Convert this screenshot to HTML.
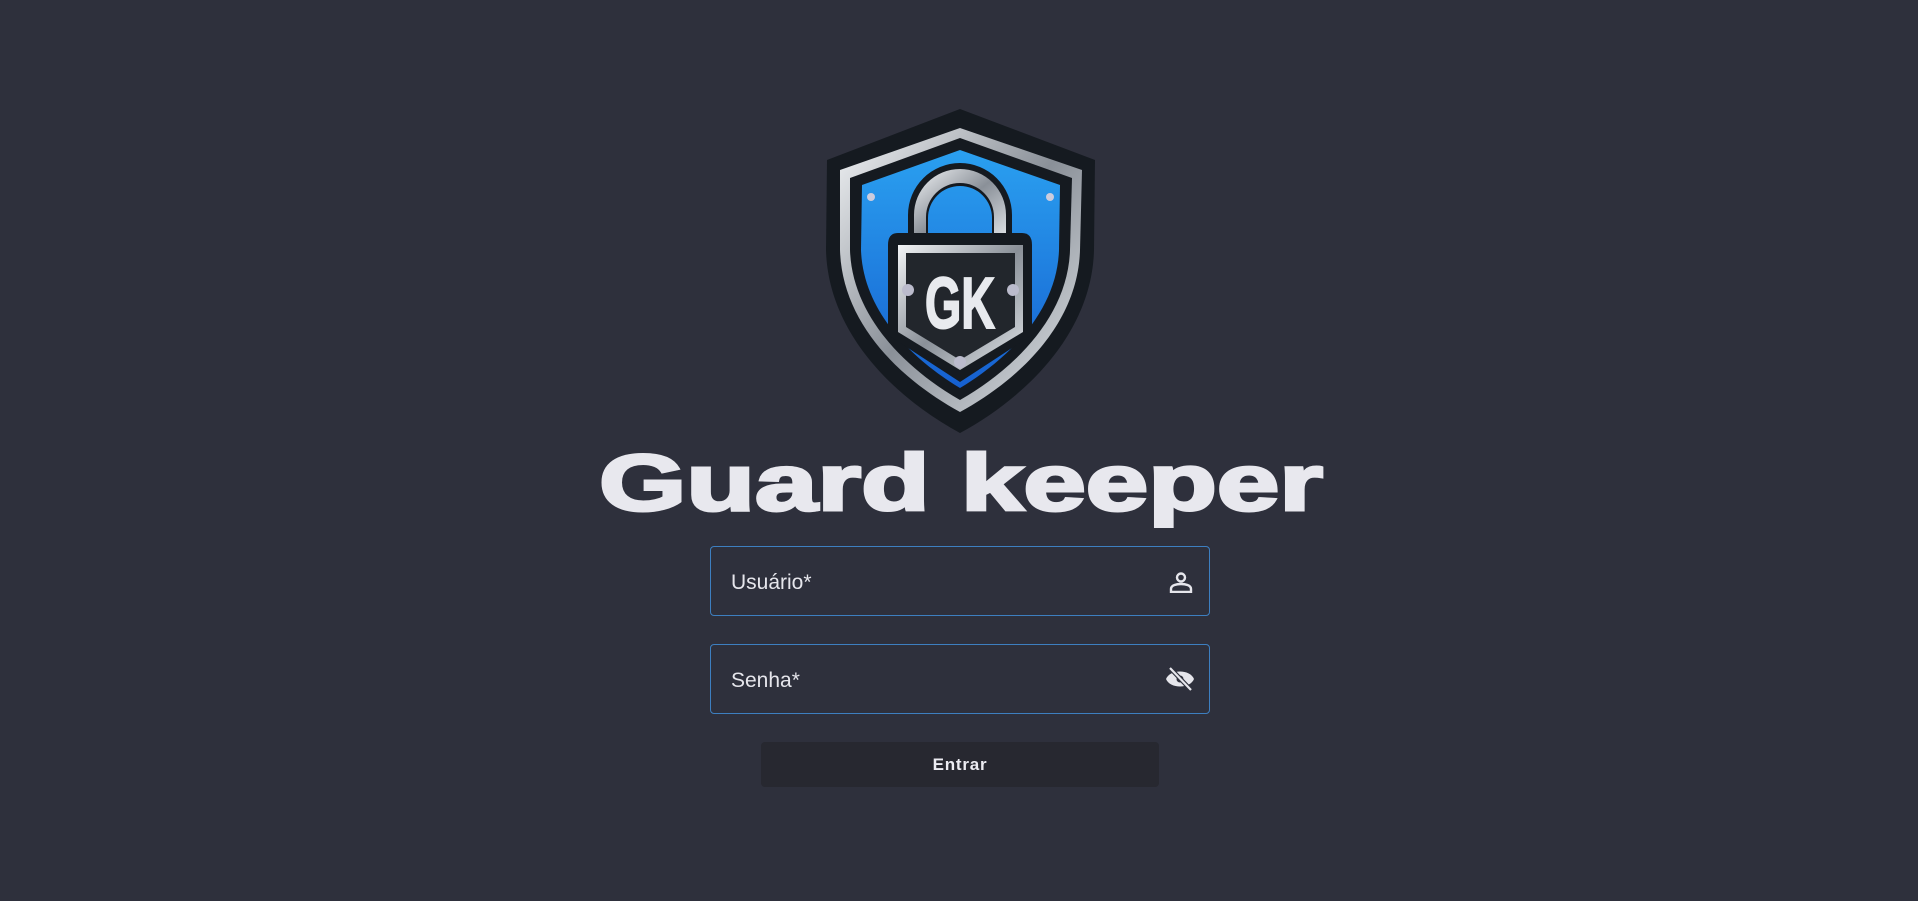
<!DOCTYPE html>
<html><head><meta charset="utf-8"><style>
html,body{margin:0;padding:0;width:1918px;height:901px;background:#2e303c;overflow:hidden;font-family:"Liberation Sans",sans-serif}
.f{position:absolute;left:710px;width:498px;height:68px;border:1px solid #3d7fc0;border-radius:4px;box-sizing:content-box}
.f span{position:absolute;left:20px;top:2px;line-height:68px;font-size:21px;color:#e6e6ec}
.btn{position:absolute;left:761px;top:742px;width:398px;height:45px;background:#272830;border-radius:4px;color:#ececf2;font-size:17px;font-weight:bold;letter-spacing:0.8px;text-align:center;line-height:45px}
</style></head><body>
<svg style="position:absolute;left:810px;top:100px" width="300" height="340" viewBox="0 0 300 340">
<defs>
<linearGradient id="sv" x1="0" y1="0" x2="1" y2="1"><stop offset="0" stop-color="#f2f4f6"/><stop offset=".5" stop-color="#8a9098"/><stop offset="1" stop-color="#e0e4e8"/></linearGradient>
<linearGradient id="bl" x1="0" y1="0" x2="0" y2="1"><stop offset="0" stop-color="#2aa0f0"/><stop offset="1" stop-color="#1660d0"/></linearGradient>
</defs>
<path d="M150 9 L285 60 L284 150 C282 230 220 295 150 333 C80 295 18 230 16 150 L17 60 Z" fill="#151a20"/>
<path d="M150 28 L272 70 L270 150 C268 222 212 278 150 312 C88 278 32 222 30 150 L30 70 Z" fill="url(#sv)"/>
<path d="M150 38 L262 78 L260 150 C258 215 206 268 150 300 C94 268 42 215 40 150 L40 78 Z" fill="#151a20"/>
<path d="M150 50 L250 85 L249 150 C247 210 200 258 150 288 C100 258 53 210 51 150 L52 85 Z" fill="url(#bl)"/>
<circle cx="61" cy="97" r="4" fill="#ccd"/><circle cx="240" cy="97" r="4" fill="#ccd"/>
<path d="M98 145 L98 115 A52 52 0 0 1 202 115 L202 145 L182 145 L182 118 A32 32 0 0 0 118 118 L118 145 Z" fill="#151a20"/>
<path d="M104 140 L104 115 A46 46 0 0 1 196 115 L196 140 L184 140 L184 117 A34 34 0 0 0 116 117 L116 140 Z" fill="url(#sv)"/>
<path d="M88 133 Q78 133 78 145 L78 235 L150 282 L222 235 L222 145 Q222 133 212 133 Z" fill="#151a20"/>
<path d="M88 145 L213 145 L213 232 L150 270 L88 232 Z" fill="url(#sv)"/>
<path d="M96 153 L205 153 L205 227 L150 260 L96 227 Z" fill="#22262c"/>
<circle cx="98" cy="190" r="6" fill="#bbc"/><circle cx="203" cy="190" r="6" fill="#bbc"/><circle cx="150" cy="262" r="6" fill="#bbc"/>
<text x="150" y="228" text-anchor="middle" font-family="Liberation Sans Narrow, Liberation Sans, sans-serif" font-weight="bold" font-size="72" fill="#e8eaee" stroke="#e8eaee" stroke-width="2" textLength="70" lengthAdjust="spacingAndGlyphs">GK</text>
</svg>
<svg style="position:absolute;left:590px;top:440px" width="740" height="100">
<text x="9" y="70" font-family="Liberation Sans, sans-serif" font-weight="bold" font-size="80" fill="#e8e8ee" stroke="#e8e8ee" stroke-width="3" stroke-linejoin="miter" textLength="724" lengthAdjust="spacingAndGlyphs">Guard keeper</text>
</svg>
<div class="f" style="top:546px"><span>Usuário*</span>
<svg style="position:absolute;left:458px;top:25px" width="24" height="21" viewBox="0 0 24 21"><circle cx="12" cy="5.5" r="4" fill="none" stroke="#e6e6ec" stroke-width="2.4"/><path d="M2 20 L2 17 C2 13 8 12 12 12 C16 12 22 13 22 17 L22 20 Z" fill="none" stroke="#e6e6ec" stroke-width="2.4"/></svg>
</div>
<div class="f" style="top:644px"><span>Senha*</span>
<svg style="position:absolute;left:455px;top:22px" width="28" height="24" viewBox="0 0 28 24"><path d="M0 12 C4 2 24 2 28 12 C24 22 4 22 0 12 Z" fill="#e6e6ec"/><circle cx="14" cy="12" r="3.5" fill="#2e303c"/><line x1="4" y1="1" x2="25" y2="23" stroke="#2e303c" stroke-width="4.5"/><line x1="4" y1="1" x2="25" y2="23" stroke="#e6e6ec" stroke-width="2.2"/></svg>
</div>
<div class="btn">Entrar</div>
</body></html>
